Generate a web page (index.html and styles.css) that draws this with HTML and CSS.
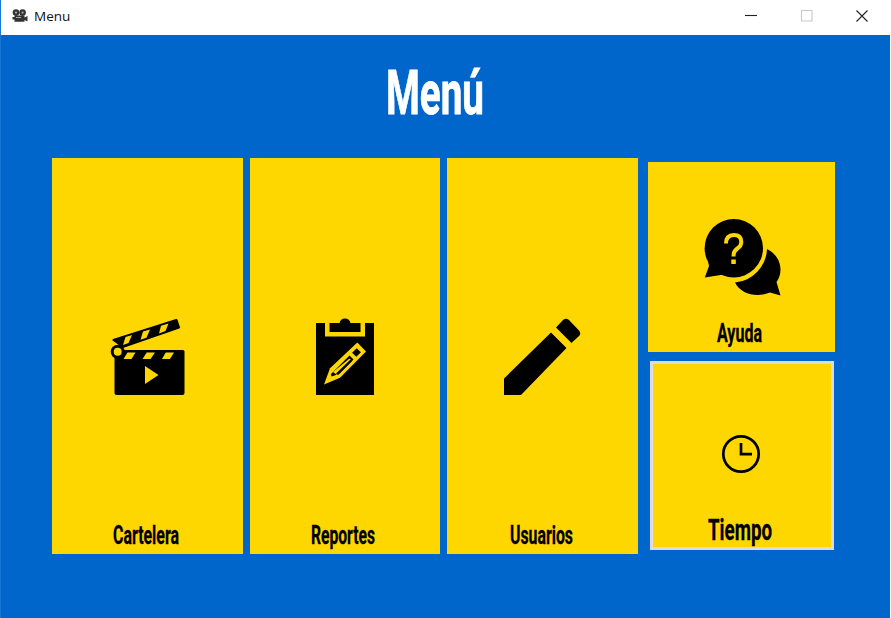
FILE: index.html
```html
<!DOCTYPE html>
<html lang="es">
<head>
<meta charset="utf-8">
<title>Menu</title>
<link rel="stylesheet" href="styles.css">
</head>
<body>
<div class="window">
  <header class="titlebar">
    <svg class="app-icon" width="17" height="14" viewBox="0 0 17 14">
      <circle cx="4" cy="3.6" r="3.3"/><circle cx="10.6" cy="3.6" r="3.3"/>
      <path d="M2.500 6.500h10v6.300h-10zM12.500 8.600l3-1.600v5.500l-3-1.600zM.5 8h2v2.500h-2z"/>
      <g class="reel"><circle cx="4" cy="3.600" r="1.100"/><circle cx="10.600" cy="3.600" r="1.100"/><path d="M4 8h5v1H4z"/></g>
    </svg>
    <span class="app-name">Menu</span>
    <div class="controls">
      <svg width="12" height="12" viewBox="0 0 12 12"><path d="M0 5.500h12"/></svg>
      <svg class="disabled" width="12" height="12" viewBox="0 0 12 12"><path d="M.5.5h10.500v10.500H.5z"/></svg>
      <svg width="12" height="12" viewBox="0 0 12 12"><path d="M.5.5l11 11M11.500.5l-11 11"/></svg>
    </div>
  </header>
  <main class="content">
    <h1 class="heading"><svg width="98" height="56"><text x="0" y="46" textLength="98" lengthAdjust="spacingAndGlyphs">Menú</text></svg></h1>
    <div class="tiles">
      <button class="tile tall">
        <svg class="icon" width="76" height="78" viewBox="0 0 76 78">
          <path d="M2.500 22.500q-.5-1 .5-1.500L66 1q1-.3 1.500.7l2.500 7.600q.2 1-.7 1.300L13 30zM4.500 32H73q1.500 0 1.500 1.500V75q0 2-2 2h-66q-2 0-2-2z"/>
          <circle cx="7.700" cy="33.700" r="7"/>
          <g class="cut"><circle cx="7.700" cy="33.700" r="4"/><path d="M15.500 19l6.500-2-3.500 8-5.500 2zM33 13.500l7-2-3.500 8.300-6 2zM51 7.800L58.500 5.500 55.500 13l-6.500 2.500zM17.500 34.500h8l-4 6.500h-8zM36.700 34.500H45l-4.500 6.500h-8zM55.700 34.500H64L60 41h-8zM35 48l13.500 9L35 66z"/></g>
        </svg>
        <svg class="label" width="66" height="30"><text x="0" y="22" textLength="66" lengthAdjust="spacingAndGlyphs">Cartelera</text></svg>
      </button>
      <button class="tile tall">
        <svg class="icon" width="60" height="78" viewBox="0 0 60 78">
          <path d="M1 5h9v13.500h40V5h9v72H1zM14.500 5h10q1-4.500 5.500-4.500T35.500 5h10v9h-31z"/>
          <path class="cut" d="M42.300 24.500l8.700 9-26 26.200-16 6.800 6-16.200z"/>
          <path d="M41.700 30.200l4.200 4.100-4.600 4.500-4.200-4.100zM34.500 37.500l4 4L24 56l-7.500 2.500-.5-2.500 15-15z"/>
          <path class="cut" d="M34.500 40.500l2 2L22 57l-4-3z"/>
          <path d="M35.500 41.500l1.500 1.500L23 57l-2-1.500z"/>
        </svg>
        <svg class="label" width="65" height="30"><text x="0" y="22" textLength="64" lengthAdjust="spacingAndGlyphs">Reportes</text></svg>
      </button>
      <button class="tile tall">
        <svg class="icon pencil" width="78" height="78" viewBox="0 0 78 78">
          <path d="M1 60.500L48 14.500l15.500 15.500L18 77H1zM53 9.500l7-7.500q3-2.500 6 0l10 10.500q2.500 3 0 5.500l-7.500 7z"/>
        </svg>
        <svg class="label" width="63" height="30"><text x="0" y="22" textLength="63" lengthAdjust="spacingAndGlyphs">Usuarios</text></svg>
      </button>
      <div class="side">
        <button class="tile help">
          <svg class="icon" width="80" height="80" viewBox="0 0 80 80">
            <path d="M32 64.500A35 35 0 0 0 64 31C77 37 81.500 53 73.500 64L77.500 77.500 67 74.500C54 80 38 76.500 32 64.500z"/>
            <circle cx="30.800" cy="30.200" r="29.200"/>
            <path d="M5 43l1 5-4.200 11.500L21 56.500z"/>
            <path class="question" d="M23 25.500q0-8.500 7.800-8.500 7.500 0 7.500 7 0 4-4 6.500-3.800 2.500-3.800 8"/>
            <path class="cut" d="M28.300 41.500h4.500v4.500h-4.500z"/>
          </svg>
          <svg class="label" width="46" height="30"><text x="0" y="22" textLength="45" lengthAdjust="spacingAndGlyphs">Ayuda</text></svg>
        </button>
        <button class="tile time">
          <svg class="icon clock" width="40" height="40" viewBox="0 0 40 40"><circle cx="20" cy="20" r="17.700"/><path d="M20 9v11.200h11"/></svg>
          <svg class="label large" width="64" height="34"><text x="0" y="25" textLength="64" lengthAdjust="spacingAndGlyphs">Tiempo</text></svg>
        </button>
      </div>
    </div>
  </main>
</div>
</body>
</html>
```

FILE: styles.css
```css
* { box-sizing: border-box; }
body { margin: 0; background: #fff; overflow: hidden; }
svg { display: block; flex: none; overflow: visible; }
.window { width: 890px; height: 618px; border-left: 1px solid #1976d2; background: #0066cc; }
.titlebar { display: flex; align-items: center; height: 34.500px; padding: 0 22px 3px 11px; background: #fff; }
.app-icon { fill: #333; }
.reel { fill: #aaa; }
.app-name { margin-left: 5px; font: 13.500px "Open Sans", "Noto Sans", sans-serif; color: #111; }
.controls { display: flex; gap: 43.500px; margin-left: auto; fill: none; stroke: #222; stroke-width: 1.100; }
.disabled { stroke: #c8c8c8; }
.content { padding: 33.500px 0 0 51px; }
.heading { width: 98px; height: 56px; margin: 0 0 34px 334px; fill: #fff; stroke: #fff; stroke-width: .8; font: 700 61px Roboto, sans-serif; }
.tiles { display: flex; gap: 7px; }
.tile { display: flex; flex-direction: column; align-items: center; width: 190.500px; padding: 0; border: 0; background: #ffd700; fill: #000; font: 700 25px Roboto, sans-serif; }
.tall { height: 396px; padding-top: 160px; }
.tall .icon { margin-left: 1px; }
.tall .pencil { margin-left: -1px; }
.tall .label { margin: 126px 2px 0 0; }
.label { stroke: #000; stroke-width: .3; }
.cut { fill: #ffd700; }
.side { display: flex; flex-direction: column; gap: 8.500px; margin: 3.500px 0 0 3.500px; }
.help { width: 187px; height: 190.500px; padding-top: 56px; }
.help .icon { margin-left: 2px; }
.help .label { margin: 22px 4px 0 0; }
.question { fill: none; stroke: #ffd700; stroke-width: 4; }
.time { width: 184px; height: 189px; margin-left: 1.500px; padding-top: 70px; border: 3px solid #dcdcdc; }
.clock { fill: none; stroke: #000; stroke-width: 2.700; }
.time .icon { margin-right: 1px; }
.large { margin: 41px 3px 0 0; font-size: 29px; }
```
